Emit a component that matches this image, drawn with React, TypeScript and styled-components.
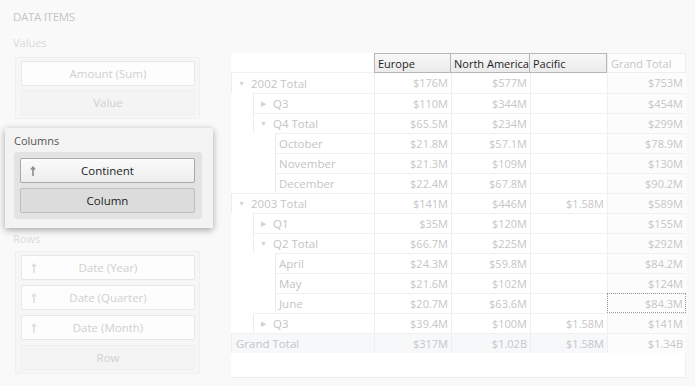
import React from "react";
import styled, { createGlobalStyle } from "styled-components";

const GlobalStyle = createGlobalStyle`
  html, body {
    margin: 0;
    padding: 0;
    background: #f9f9f9;
    font-family: "Open Sans", "Noto Sans", sans-serif;
    font-size: 11px;
  }
`;

const Page = styled.div`
  display: flex;
  width: 695px;
  height: 386px;
  overflow: hidden;
`;

const Sidebar = styled.div`
  width: 215px;
  flex: none;
  display: flex;
  flex-direction: column;
`;

const Heading = styled.div`
  margin: 10px 0 0 13px;
  color: #c6c6c6;
  font-size: 11.5px;
  line-height: 14px;
  letter-spacing: -0.3px;
`;

const SectionLabel = styled.div<{ $active?: boolean }>`
  margin: ${(p) => (p.$active ? "6px 0 4px 9px" : "12px 0 7px 13px")};
  color: ${(p) => (p.$active ? "#555" : "#d9d9d9")};
  font-size: 11px;
  line-height: 14px;
`;

const Group = styled.div<{ $gap: number }>`
  margin-left: 15px;
  width: 185px;
  box-sizing: border-box;
  padding: 3px 4px 3px 5px;
  background: #f6f6f6;
  border: 1px solid #f0f0f0;
  border-radius: 2px;
  display: flex;
  flex-direction: column;
  gap: ${(p) => p.$gap}px;
`;

const ActiveSection = styled.div`
  margin: 9px 0 0 5px;
  width: 208px;
  height: 100px;
  box-sizing: border-box;
  background: #f3f3f3;
  box-shadow: 0 2px 7px rgba(0, 0, 0, 0.35);
  position: relative;
  z-index: 1;
`;

const ActiveGroup = styled.div`
  margin-left: 9px;
  width: 188px;
  height: 67px;
  box-sizing: border-box;
  padding: 6px 7px 6px 6px;
  background: #e3e3e3;
  border-radius: 3px;
  display: flex;
  flex-direction: column;
  gap: 5px;
`;

const ItemButton = styled.div<{ $active?: boolean; $placeholder?: boolean }>`
  position: relative;
  height: 25px;
  box-sizing: border-box;
  display: flex;
  align-items: center;
  justify-content: center;
  border-radius: 2px;
  font-size: 11.5px;
  border: 1px solid
    ${(p) =>
      p.$active ? (p.$placeholder ? "#bdbdbd" : "#a9a9a9") : p.$placeholder ? "#efefef" : "#e7e7e7"};
  background: ${(p) =>
    p.$active
      ? p.$placeholder
        ? "#dcdcdc"
        : "linear-gradient(#fbfbfb, #ededed)"
      : p.$placeholder
      ? "#f4f4f4"
      : "#fdfdfd"};
  color: ${(p) => (p.$active ? "#1e1e1e" : "#d0d0d0")};
`;

const SortIcon = styled.svg<{ $active?: boolean }>`
  position: absolute;
  left: 8px;
  top: 6px;
  color: ${(p) => (p.$active ? "#8a8a8a" : "#dedede")};
`;

const Arrow = ({ active }: { active?: boolean }) => (
  <SortIcon $active={active} width="8" height="12" viewBox="0 0 8 12">
    <path d="M4 1 L1 4.5 H3.2 V11 H4.8 V4.5 H7 Z" fill="currentColor" />
  </SortIcon>
);

const Content = styled.div`
  padding: 53px 0 0 16px;
`;

const Grid = styled.div`
  width: 455px;
  height: 325px;
  box-sizing: border-box;
  background: #fff;
  border: 1px solid #eeeeee;
  border-left: none;
  border-top: none;
`;

const COLS = "143px 77px 79px 77px 79px";

const Row = styled.div<{ $total?: boolean }>`
  display: grid;
  grid-template-columns: ${COLS};
  height: 20px;
  background: ${(p) => (p.$total ? "#f6f8fa" : "transparent")};
`;

const HeadCell = styled.div<{ $active?: boolean; $first?: boolean }>`
  box-sizing: border-box;
  height: 20px;
  padding: 2px 3px;
  font-size: 11px;
  line-height: 15px;
  white-space: nowrap;
  overflow: hidden;
  color: ${(p) => (p.$active ? "#1e1e1e" : "#c6c6c6")};
  background: ${(p) => (p.$active ? "linear-gradient(#f8f8f8, #ebebeb)" : "#fdfdfd")};
  border: 1px solid ${(p) => (p.$active ? "#b6b6b6" : "#eeeeee")};
  margin-left: ${(p) => (p.$active && !p.$first ? "-1px" : "0")};
`;

const Corner = styled.div`
  border-bottom: 1px solid #f2f2f2;
`;

const RowHead = styled.div`
  display: flex;
  height: 20px;
`;

const Indent = styled.div`
  width: 22px;
  flex: none;
`;

const HeadBody = styled.div<{ $leaf?: boolean; $first?: boolean }>`
  flex: 1;
  display: flex;
  align-items: center;
  box-sizing: border-box;
  border-top: ${(p) => (p.$first ? "none" : "1px solid #f0f0f0")};
  border-left: 1px solid #ececec;
  padding-left: ${(p) => (p.$leaf ? "3px" : "4px")};
  color: #c4c4c4;
  font-size: 11.5px;
  white-space: nowrap;
`;

const Toggle = styled.span`
  width: 11px;
  margin-right: 4px;
  display: inline-flex;
  justify-content: center;
  color: #d2d2d2;
  font-size: 7px;
`;

const ValueCell = styled.div<{ $grand?: boolean; $focus?: boolean; $first?: boolean }>`
  box-sizing: border-box;
  height: 20px;
  padding: 2px 3px 0 0;
  text-align: right;
  color: #c6c6c6;
  font-size: 11px;
  line-height: 16px;
  border-top: ${(p) => (p.$first ? "none" : "1px solid #f0f0f0")};
  border-left: 1px solid #efefef;
  background: ${(p) => (p.$grand ? "#fcfcfd" : "transparent")};
  outline: ${(p) => (p.$focus ? "1px dotted #9a9a9a" : "none")};
  outline-offset: -1px;
`;

type Line = {
  label: string;
  level: number;
  toggle?: "open" | "closed";
  values: string[];
  total?: boolean;
  focus?: boolean;
};

const lines: Line[] = [
  { label: "2002 Total", level: 0, toggle: "open", values: ["$176M", "$577M", "", "$753M"] },
  { label: "Q3", level: 1, toggle: "closed", values: ["$110M", "$344M", "", "$454M"] },
  { label: "Q4 Total", level: 1, toggle: "open", values: ["$65.5M", "$234M", "", "$299M"] },
  { label: "October", level: 2, values: ["$21.8M", "$57.1M", "", "$78.9M"] },
  { label: "November", level: 2, values: ["$21.3M", "$109M", "", "$130M"] },
  { label: "December", level: 2, values: ["$22.4M", "$67.8M", "", "$90.2M"] },
  { label: "2003 Total", level: 0, toggle: "open", values: ["$141M", "$446M", "$1.58M", "$589M"] },
  { label: "Q1", level: 1, toggle: "closed", values: ["$35M", "$120M", "", "$155M"] },
  { label: "Q2 Total", level: 1, toggle: "open", values: ["$66.7M", "$225M", "", "$292M"] },
  { label: "April", level: 2, values: ["$24.3M", "$59.8M", "", "$84.2M"] },
  { label: "May", level: 2, values: ["$21.6M", "$102M", "", "$124M"] },
  { label: "June", level: 2, values: ["$20.7M", "$63.6M", "", "$84.3M"], focus: true },
  { label: "Q3", level: 1, toggle: "closed", values: ["$39.4M", "$100M", "$1.58M", "$141M"] },
  { label: "Grand Total", level: 0, values: ["$317M", "$1.02B", "$1.58M", "$1.34B"], total: true },
];

const App = (): JSX.Element => {
  return (
    <>
      <GlobalStyle />
      <Page>
        <Sidebar>
          <Heading>DATA ITEMS</Heading>
          <SectionLabel>Values</SectionLabel>
          <Group $gap={4}>
            <ItemButton>Amount (Sum)</ItemButton>
            <ItemButton $placeholder>Value</ItemButton>
          </Group>
          <ActiveSection>
            <SectionLabel $active>Columns</SectionLabel>
            <ActiveGroup>
              <ItemButton $active>
                <Arrow active />
                Continent
              </ItemButton>
              <ItemButton $active $placeholder>Column</ItemButton>
            </ActiveGroup>
          </ActiveSection>
          <SectionLabel style={{ margin: "4px 0 5px 13px" }}>Rows</SectionLabel>
          <Group $gap={5}>
            <ItemButton>
              <Arrow />
              Date (Year)
            </ItemButton>
            <ItemButton>
              <Arrow />
              Date (Quarter)
            </ItemButton>
            <ItemButton>
              <Arrow />
              Date (Month)
            </ItemButton>
            <ItemButton $placeholder>Row</ItemButton>
          </Group>
        </Sidebar>
        <Content>
          <Grid>
            <Row>
              <Corner />
              <HeadCell $active $first>Europe</HeadCell>
              <HeadCell $active>North America</HeadCell>
              <HeadCell $active>Pacific</HeadCell>
              <HeadCell>Grand Total</HeadCell>
            </Row>
            {lines.map((line, i) => (
              <Row key={i} $total={line.total}>
                <RowHead>
                  {Array.from({ length: line.level }).map((_, k) => (
                    <Indent key={k} />
                  ))}
                  <HeadBody $leaf={line.level === 2} $first={i === 0}>
                    {line.level < 2 && !line.total && (
                      <Toggle>{line.toggle === "open" ? "▼" : "▶"}</Toggle>
                    )}
                    {line.label}
                  </HeadBody>
                </RowHead>
                {line.values.map((v, j) => (
                  <ValueCell key={j} $first={i === 0} $grand={j === 3} $focus={line.focus && j === 3}>
                    {v}
                  </ValueCell>
                ))}
              </Row>
            ))}
          </Grid>
        </Content>
      </Page>
    </>
  );
};

export default App;
